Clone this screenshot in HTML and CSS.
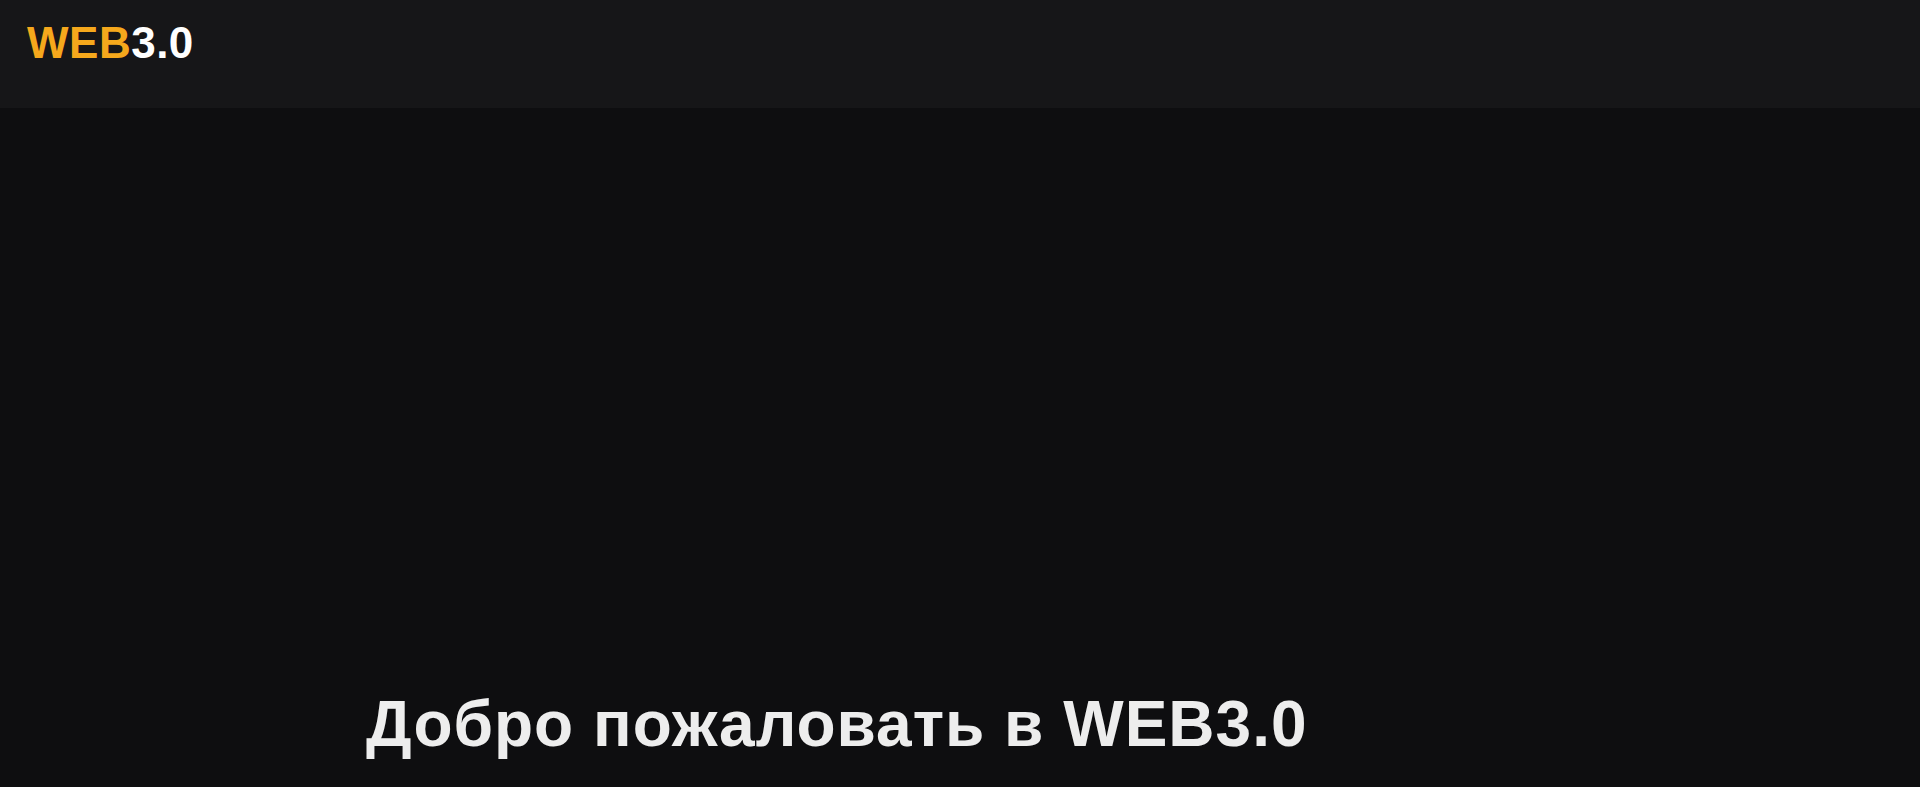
FILE: index.html
```html
<!DOCTYPE html>
<html lang="ru">
<head>
<meta charset="utf-8">
<title>WEB3.0</title>
<link rel="stylesheet" href="styles.css">
</head>
<body>
<header class="topbar">
  <a class="logo" href="#"><span class="logo-accent">WEB</span>3.0</a>
</header>
<main class="hero">
  <h1 class="hero-title">Добро пожаловать в WEB3.0</h1>
</main>
</body>
</html>
```
FILE: styles.css
```css
html, body {
  margin: 0;
  padding: 0;
  background: #0e0e10;
  height: 100%;
  overflow: hidden;
}
body {
  font-family: "Liberation Sans", Arial, sans-serif;
  color: #eeeeee;
}
.topbar {
  height: 108px;
  background: #161618;
  display: flex;
  align-items: flex-start;
  padding: 0 27px;
  box-sizing: border-box;
}
.logo {
  margin-top: 18px;
  font-size: 44px;
  font-weight: 700;
  line-height: 50px;
  color: #ffffff;
  text-decoration: none;
  letter-spacing: 0.5px;
}
.logo-accent {
  color: #f5a81c;
}
.hero {
  padding: 576px 0 0 366px;
}
.hero-title {
  margin: 0;
  font-size: 64px;
  line-height: 80px;
  font-weight: 700;
  letter-spacing: 1px;
  color: #ededed;
}
```
